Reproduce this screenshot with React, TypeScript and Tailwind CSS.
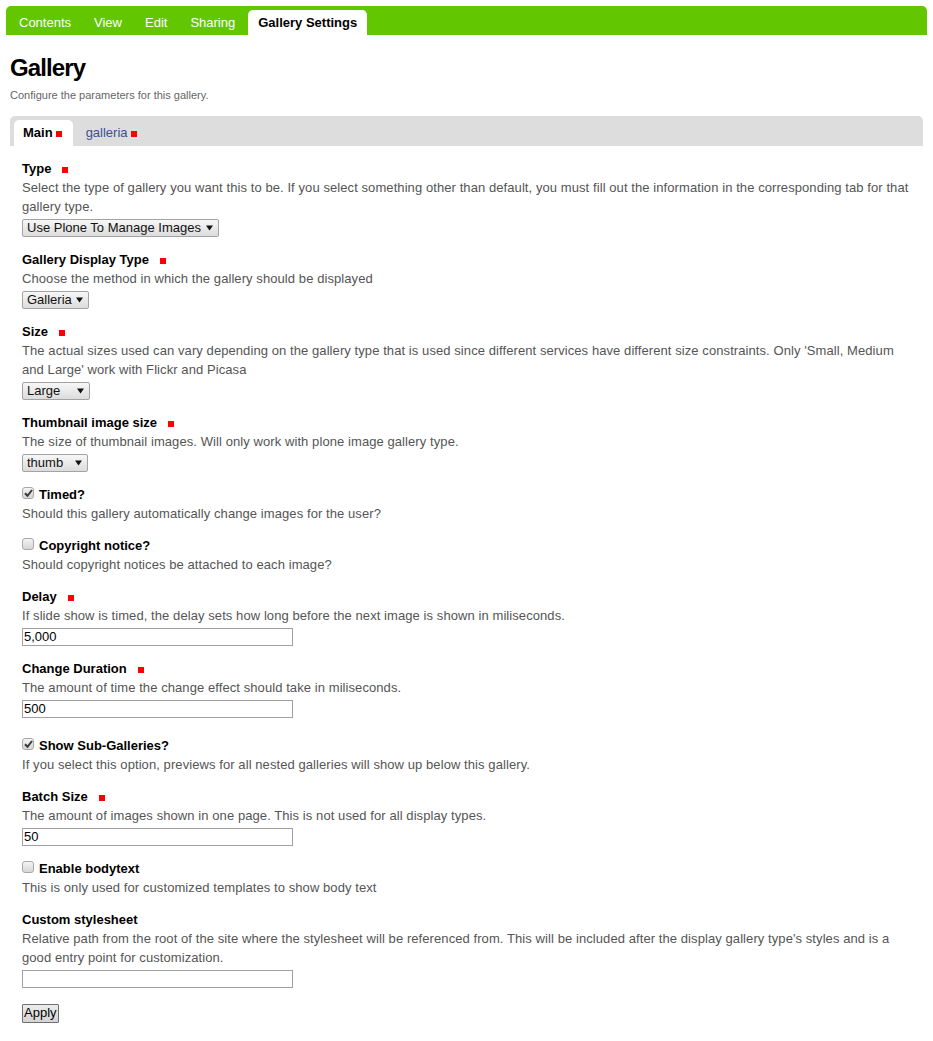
import React from "react";

const Req = ({ className = "ml-[11px]" }: { className?: string }) => (
  <span className={`inline-block w-[6px] h-[6px] bg-[#ff0000] ${className}`}></span>
);

const Arrow = () => (
  <svg width="7" height="6" viewBox="0 0 7 6" className="shrink-0">
    <path d="M0 0.5 H7 L3.5 5.5 Z" fill="#111" />
  </svg>
);

const Select = ({ value, width }: { value: string; width: string }) => (
  <div
    className={`mt-[3px] h-[18px] ${width} w-fit flex items-center justify-between gap-[4px] pl-[4px] pr-[5px] border border-[#a3a3a3] rounded-[2px] bg-gradient-to-b from-[#f7f7f7] to-[#dcdcdc] text-[#111] leading-[16px]`}
  >
    <span>{value}</span>
    <Arrow />
  </div>
);

const TextInput = ({ value }: { value: string }) => (
  <div className="mt-[3px] h-[18px] w-[271px] border border-[#a0a0a0] bg-white pl-[1px] leading-[16px] text-black">
    {value}
  </div>
);

const Checkbox = ({ checked }: { checked?: boolean }) => (
  <span className="mt-[2px] w-[12px] h-[12px] shrink-0 rounded-[3px] border border-[#a8a8a8] bg-gradient-to-b from-[#f4f4f4] to-[#d6d6d6] flex items-center justify-center">
    {checked && (
      <svg width="9" height="8" viewBox="0 0 9 8">
        <path d="M1 4.2 L3.5 6.8 L8 1" stroke="#3a3a3a" strokeWidth="2" fill="none" />
      </svg>
    )}
  </span>
);

type FieldProps = {
  label: string;
  required?: boolean;
  desc: string;
  children?: React.ReactNode;
  className?: string;
};

const Field = ({ label, required, desc, children, className = "mb-[13px]" }: FieldProps) => (
  <div className={className}>
    <div className="flex items-center font-bold text-black leading-[19px]">
      {label}
      {required && <Req className="ml-[11px] mt-[2px]" />}
    </div>
    <div className="text-[#555] leading-[19px] tracking-[0.08px]">{desc}</div>
    {children}
  </div>
);

const CheckField = ({
  label,
  desc,
  checked,
  className = "",
}: {
  label: string;
  desc: string;
  checked?: boolean;
  className?: string;
}) => (
  <div className={`mb-[13px] ${className}`}>
    <div className="flex items-start gap-[5px] font-bold text-black leading-[19px]">
      <Checkbox checked={checked} />
      {label}
    </div>
    <div className="text-[#555] leading-[19px] tracking-[0.08px]">{desc}</div>
  </div>
);

export default function App() {
  const tabs = ["Contents", "View", "Edit", "Sharing"];
  return (
    <div className="min-h-screen bg-white text-[13px] font-['Liberation_Sans',Arial,sans-serif]">
      <div className="pt-[6px] px-[6px]">
        <nav className="h-[29px] bg-[#62c600] rounded-t-[5px] flex items-end pl-[3px] gap-[3px]">
          {tabs.map((t) => (
            <div key={t} className="h-[25px] px-[10px] flex items-center text-white">
              {t}
            </div>
          ))}
          <div className="h-[25px] px-[10px] flex items-center bg-white rounded-t-[5px] font-bold text-black">
            Gallery Settings
          </div>
        </nav>
      </div>

      <h1 className="mt-[19px] ml-[10px] text-[24px] leading-[28px] font-bold tracking-[-0.9px] text-black">
        Gallery
      </h1>
      <p className="mt-[5px] ml-[10px] text-[11px] leading-[16px] text-[#666]">
        Configure the parameters for this gallery.
      </p>

      <div className="mt-[13px] mx-[10px] h-[30px] bg-[#dddddd] rounded-t-[5px] flex items-end pl-[4px] gap-[4px]">
        <div className="h-[26px] pl-[9px] pr-[11px] flex items-center bg-white rounded-t-[5px] font-bold text-black">
          Main
          <Req className="ml-[3px] mt-[2px]" />
        </div>
        <div className="h-[26px] px-[9px] flex items-center text-[#404e94]">
          galleria
          <Req className="ml-[3px] mt-[2px]" />
        </div>
      </div>

      <form className="px-[22px] pt-[13px] pb-[16px]">
        <Field
          label="Type"
          required
          desc="Select the type of gallery you want this to be. If you select something other than default, you must fill out the information in the corresponding tab for that gallery type."
        >
          <Select value="Use Plone To Manage Images" width="min-w-[197px]" />
        </Field>
        <Field
          label="Gallery Display Type"
          required
          desc="Choose the method in which the gallery should be displayed"
        >
          <Select value="Galleria" width="min-w-[66px]" />
        </Field>
        <Field
          label="Size"
          required
          desc="The actual sizes used can vary depending on the gallery type that is used since different services have different size constraints. Only 'Small, Medium and Large' work with Flickr and Picasa"
        >
          <Select value="Large" width="min-w-[68px]" />
        </Field>
        <Field
          label="Thumbnail image size"
          required
          desc="The size of thumbnail images. Will only work with plone image gallery type."
        >
          <Select value="thumb" width="min-w-[66px]" />
        </Field>
        <CheckField
          label="Timed?"
          checked
          desc="Should this gallery automatically change images for the user?"
        />
        <CheckField
          label="Copyright notice?"
          desc="Should copyright notices be attached to each image?"
        />
        <Field
          label="Delay"
          required
          desc="If slide show is timed, the delay sets how long before the next image is shown in miliseconds."
        >
          <TextInput value="5,000" />
        </Field>
        <Field
          label="Change Duration"
          required
          desc="The amount of time the change effect should take in miliseconds."
          className="mb-[18px]"
        >
          <TextInput value="500" />
        </Field>
        <CheckField
          label="Show Sub-Galleries?"
          checked
          desc="If you select this option, previews for all nested galleries will show up below this gallery."
        />
        <Field
          label="Batch Size"
          required
          desc="The amount of images shown in one page. This is not used for all display types."
        >
          <TextInput value="50" />
        </Field>
        <CheckField
          label="Enable bodytext"
          desc="This is only used for customized templates to show body text"
        />
        <Field
          label="Custom stylesheet"
          desc="Relative path from the root of the site where the stylesheet will be referenced from. This will be included after the display gallery type's styles and is a good entry point for customization."
          className="mb-[15px]"
        >
          <TextInput value="" />
        </Field>
        <button
          type="button"
          className="h-[19px] px-[1px] border border-[#6f6f6f] bg-gradient-to-b from-[#ededed] to-[#d4d4d4] text-black leading-[16px] rounded-[1px]"
        >
          Apply
        </button>
      </form>
    </div>
  );
}
